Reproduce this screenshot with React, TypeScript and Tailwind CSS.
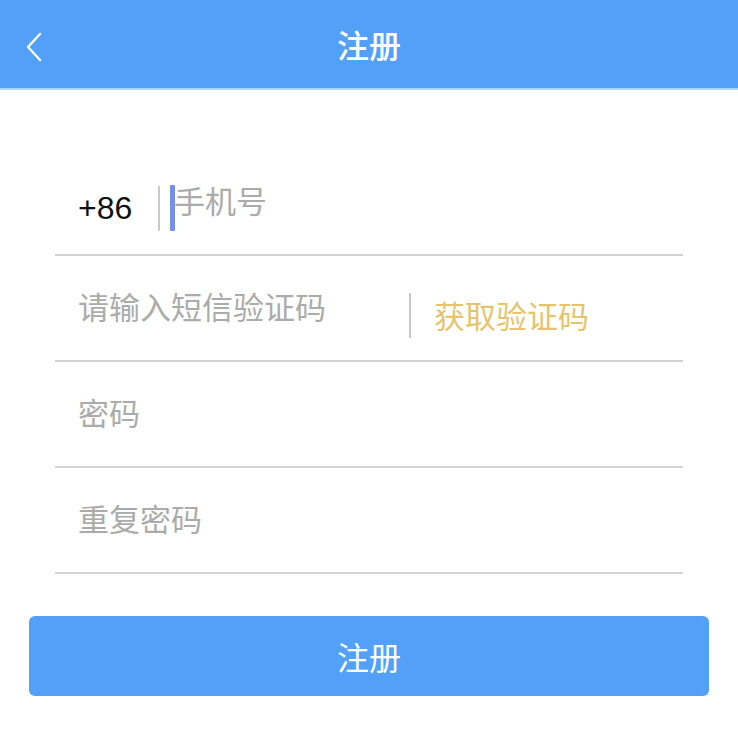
import React from 'react';

const cjk = { fontFamily: '"Noto Sans CJK SC", "Noto Sans", sans-serif' };

function BackIcon() {
  return (
    <svg width="20" height="30" viewBox="0 0 20 30" fill="none">
      <polyline
        points="16,2 4,15 16,28"
        stroke="white"
        strokeWidth="2.4"
        strokeLinecap="round"
        strokeLinejoin="round"
      />
    </svg>
  );
}

interface FieldRowProps {
  placeholder: string;
  children?: React.ReactNode;
  prefix?: React.ReactNode;
}

function FieldRow({ placeholder, children, prefix }: FieldRowProps) {
  return (
    <div className="flex h-[106px] items-center border-b-2 border-[#d2d2d2] pl-[23px]">
      {prefix}
      <input
        className="h-full min-w-0 flex-1 bg-transparent pb-[6px] text-[31px] text-[#333] outline-none placeholder:text-[#ababab]"
        style={cjk}
        placeholder={placeholder}
      />
      {children}
    </div>
  );
}

export default function App() {
  return (
    <div className="min-h-screen bg-white" style={cjk}>
      <header className="relative flex h-[90px] items-center justify-center border-b-2 border-[#a8d6ff] bg-[#52a0f8]">
        <button type="button" className="absolute left-[24px] top-[32px]">
          <BackIcon />
        </button>
        <h1 className="text-[32px] font-medium text-white">注册</h1>
      </header>

      <form className="mx-[55px] pt-[60px]" onSubmit={(e) => e.preventDefault()}>
        <FieldRow
          placeholder="手机号"
          prefix={
            <div className="flex items-center pt-[12px]">
              <span
                className="w-[80px] text-[32px] text-[#111]"
                style={{ fontFamily: '"Liberation Sans", Arial, sans-serif' }}
              >
                +86
              </span>
              <span className="h-[45px] w-[2px] bg-[#c9c9c9]" />
              <span className="ml-[10px] mr-[-1px] h-[46px] w-[5px] rounded-[1px] bg-[#7391ea]" />
            </div>
          }
        />
        <FieldRow placeholder="请输入短信验证码">
          <div className="flex w-[274px] items-center pt-[14px]">
            <span className="h-[45px] w-[2px] bg-[#c9c9c9]" />
            <button type="button" className="ml-[23px] text-[31px] text-[#e6c46c]">
              获取验证码
            </button>
          </div>
        </FieldRow>
        <FieldRow placeholder="密码" />
        <FieldRow placeholder="重复密码" />
      </form>

      <div className="mx-[29px] mt-[42px]">
        <button
          type="button"
          className="flex h-[80px] w-full items-center justify-center rounded-[6px] bg-[#52a0f8] text-[32px] text-white"
        >
          注册
        </button>
      </div>
    </div>
  );
}
